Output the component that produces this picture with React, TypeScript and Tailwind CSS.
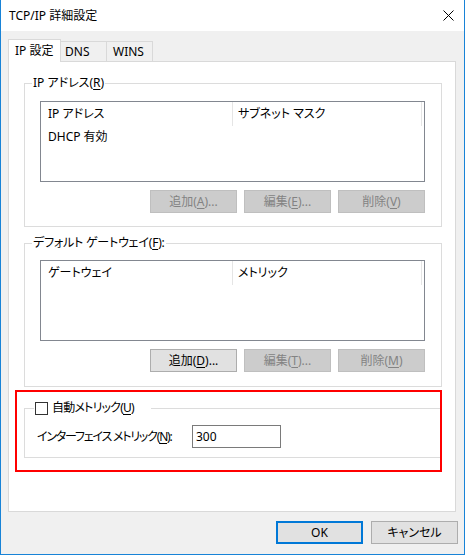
import React from "react";

const U = ({ c }: { c: string }) => (
  <span className="underline underline-offset-[2px] decoration-[1px]">{c}</span>
);

function Btn({
  children,
  disabled,
}: {
  children: React.ReactNode;
  disabled?: boolean;
}) {
  return (
    <div
      className={
        disabled
          ? "w-[87px] h-[23px] flex items-center justify-center border border-[#bfbfbf] bg-[#cccccc] text-[#838383]"
          : "w-[87px] h-[23px] flex items-center justify-center border border-[#adadad] bg-[#e1e1e1] text-black"
      }
    >
      {children}
    </div>
  );
}

function ListBox({
  c1,
  c2,
  rows,
}: {
  c1: string;
  c2: string;
  rows?: string[];
}) {
  return (
    <div className="w-[385px] h-[81px] border border-[#828790] bg-white">
      <div className="flex h-[24px]">
        <div className="w-[191px] pl-[7px] flex items-center">{c1}</div>
        <div className="w-px bg-[#e5e5e5]" />
        <div className="w-[188px] pl-[5px] flex items-center">{c2}</div>
        <div className="w-px bg-[#e5e5e5]" />
      </div>
      {(rows || []).map((r) => (
        <div key={r} className="h-[22px] pl-[7px] flex items-center">
          {r}
        </div>
      ))}
    </div>
  );
}

export default function App() {
  return (
    <div className="w-[465px] h-[555px] bg-[#f0f0f0] border-x border-b border-[#1883d7] flex flex-col text-[12px] leading-[16px] text-black whitespace-nowrap font-['Noto_Sans','Noto_Sans_CJK_JP',sans-serif] [font-feature-settings:'palt']">
      {/* Title bar */}
      <div className="h-[31px] bg-white flex items-center justify-between pl-[8px] pr-[10px] shrink-0">
        <span>TCP/IP 詳細設定</span>
        <svg width="11" height="11" viewBox="0 0 11 11">
          <path d="M0.5 0.5 L10.5 10.5 M10.5 0.5 L0.5 10.5" stroke="#000" strokeWidth="1" />
        </svg>
      </div>

      <div className="pt-[8px] pl-[7px] flex flex-col">
        {/* Tabs */}
        <div className="flex items-end h-[22px]">
          <div className="relative z-10 -mb-px h-[23px] w-[53px] bg-white border-l border-t border-r border-[#d9d9d9] pl-[6px] flex items-center">
            IP 設定
          </div>
          <div className="h-[20px] w-[46px] border-t border-r border-[#d9d9d9] pl-[4px] flex items-center">
            DNS
          </div>
          <div className="h-[20px] w-[46px] border-t border-r border-[#d9d9d9] pl-[6px] flex items-center">
            WINS
          </div>
        </div>

        {/* Panel */}
        <div className="w-[448px] h-[451px] bg-white border border-[#d9d9d9] pl-[15px] pt-[21px] flex flex-col">
          {/* Group 1 */}
          <div className="relative w-[418px] h-[144px] border border-[#dcdcdc] pl-[15px] pt-[17px] shrink-0">
            <div className="absolute left-[7px] top-[-9px] h-[16px] bg-white px-[1px] flex items-center">
              IP アドレス(<U c="R" />)
            </div>
            <ListBox c1="IP アドレス" c2="サブネット マスク" rows={["DHCP 有効"]} />
            <div className="w-[385px] mt-[8px] flex justify-end gap-[7px]">
              <Btn disabled>
                追加(<U c="A" />)...
              </Btn>
              <Btn disabled>
                編集(<U c="E" />)...
              </Btn>
              <Btn disabled>
                削除(<U c="V" />)
              </Btn>
            </div>
          </div>

          {/* Group 2 */}
          <div className="relative mt-[16px] w-[418px] h-[144px] border border-[#dcdcdc] pl-[15px] pt-[16px] shrink-0">
            <div className="absolute left-[7px] top-[-9px] h-[16px] bg-white px-[1px] flex items-center tracking-[-0.2px]">
              デフォルト ゲートウェイ(<U c="F" />):
            </div>
            <ListBox c1="ゲートウェイ" c2="メトリック" />
            <div className="w-[385px] mt-[8px] flex justify-end gap-[7px]">
              <Btn>
                追加(<U c="D" />)...
              </Btn>
              <Btn disabled>
                編集(<U c="T" />)...
              </Btn>
              <Btn disabled>
                削除(<U c="M" />)
              </Btn>
            </div>
          </div>

          {/* Group 3 */}
          <div className="relative mt-[21px] w-[418px] h-[50px] border border-[#dcdcdc] pl-[12px] pt-[16px] shrink-0">
            <div className="absolute left-[9px] top-[-9px] h-[16px] w-[117px] bg-white px-[1px] flex items-center gap-[4px]">
              <div className="w-[13px] h-[13px] border border-[#333333] bg-white shrink-0" />
              <span className="tracking-[-0.8px]">
                自動メトリック(<U c="U" />)
              </span>
            </div>
            <div className="flex items-center">
              <div className="w-[155px] shrink-0 tracking-[-1.2px]">
                インターフェイス メトリック(<U c="N" />):
              </div>
              <div className="w-[89px] h-[23px] border border-[#7a7a7a] bg-white pl-[3px] flex items-center shrink-0">
                300
              </div>
            </div>
            {/* red highlight overlay */}
            <div className="absolute left-[-10px] top-[-19px] w-[427px] h-[82px] border-2 border-[#ff0000] pointer-events-none" />
          </div>
        </div>

        {/* Bottom buttons */}
        <div className="mt-[9px] pr-[6px] flex justify-end gap-[8px]">
          <div className="w-[87px] h-[23px] flex items-center justify-center border-2 border-[#0078d7] bg-[#e1e1e1]">
            OK
          </div>
          <div className="w-[87px] h-[23px] flex items-center justify-center border border-[#adadad] bg-[#e1e1e1]">
            キャンセル
          </div>
        </div>
      </div>
    </div>
  );
}
